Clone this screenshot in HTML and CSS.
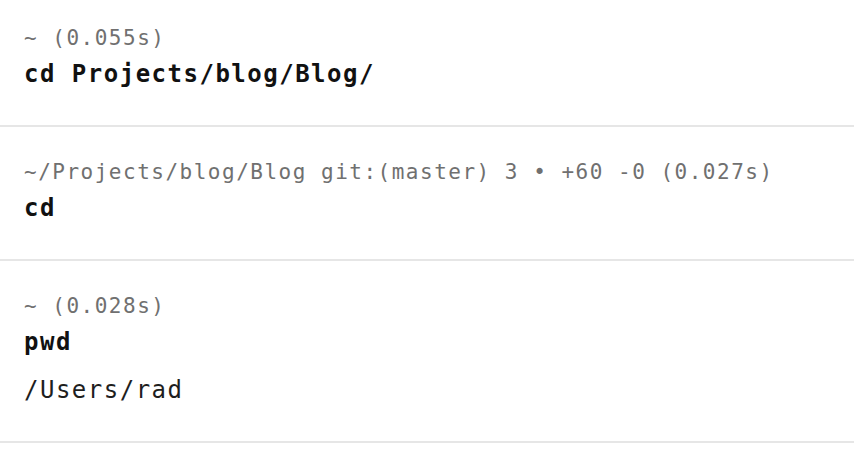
FILE: index.html
```html
<!DOCTYPE html>
<html lang="en">
<head>
<meta charset="utf-8">
<title>Terminal history</title>
<link rel="stylesheet" href="styles.css">
</head>
<body>
<main class="history">
  <section class="block">
    <div class="prompt">~ (0.055s)</div>
    <div class="command">cd Projects/blog/Blog/</div>
  </section>
  <section class="block">
    <div class="prompt">~/Projects/blog/Blog git:(master) 3 • +60 -0 (0.027s)</div>
    <div class="command">cd</div>
  </section>
  <section class="block">
    <div class="prompt">~ (0.028s)</div>
    <div class="command">pwd</div>
    <div class="output">/Users/rad</div>
  </section>
</main>
</body>
</html>
```
FILE: styles.css
```css
html, body {
  margin: 0;
  padding: 0;
  background: #ffffff;
}

body {
  font-family: "DejaVu Sans Mono", "Liberation Mono", monospace;
  width: 854px;
  height: 460px;
  overflow: hidden;
}

.history {
  display: flex;
  flex-direction: column;
}

.block {
  padding: 31px 24px 29px;
  border-bottom: 2px solid #e6e6e6;
}

.block:first-child {
  padding-top: 24px;
}

.prompt,
.command,
.output {
  white-space: pre;
  letter-spacing: 1.5px;
}

.prompt {
  font-size: 21px;
  line-height: 28px;
  color: #707070;
}

.command {
  font-size: 24px;
  line-height: 44px;
  font-weight: bold;
  color: #111111;
}

.output {
  margin-top: 4px;
  font-size: 24px;
  line-height: 44px;
  color: #1e1e1e;
}
```
